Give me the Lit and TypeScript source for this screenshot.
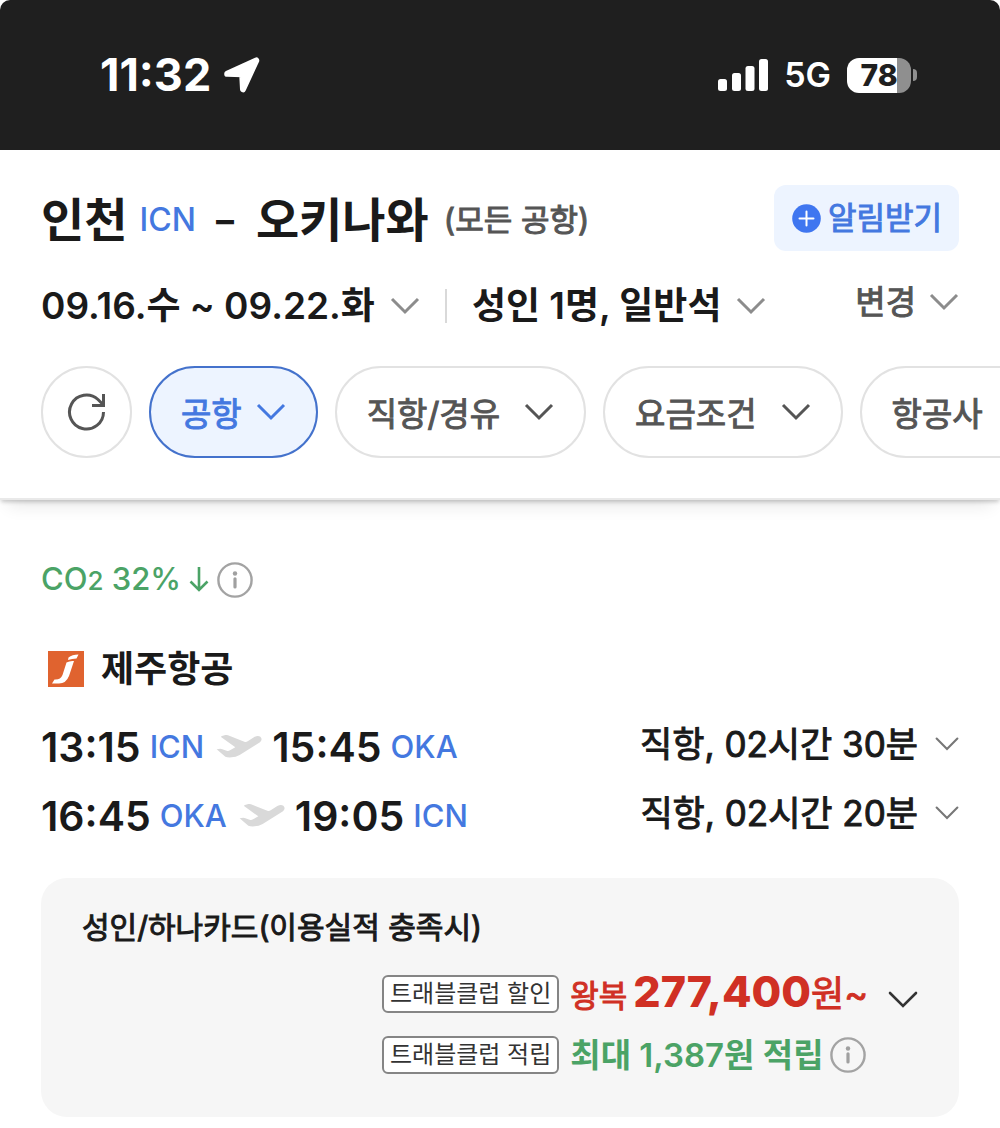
import { LitElement, html, css, svg } from "lit";
import { customElement, property } from "lit/decorators.js";

interface Leg {
  departTime: string;
  departCode: string;
  arriveTime: string;
  arriveCode: string;
  duration: string;
}

const legs: Leg[] = [
  { departTime: "13:15", departCode: "ICN", arriveTime: "15:45", arriveCode: "OKA", duration: "직항, 02시간 30분" },
  { departTime: "16:45", departCode: "OKA", arriveTime: "19:05", arriveCode: "ICN", duration: "직항, 02시간 20분" },
];

const filters = [
  { label: "공항", active: true },
  { label: "직항/경유", active: false },
  { label: "요금조건", active: false },
  { label: "항공사", active: false },
];

const paths = {
  chevron: svg`<path d="M2 2 15 15 28 2" fill="none" stroke="currentColor" stroke-width="3" />`,
  thinChevron: svg`<path d="M2 2 15 15 28 2" fill="none" stroke="currentColor" stroke-width="2.6" stroke-linecap="round" />`,
};

/* Hangul has no medium cut, so a hairline stroke thickens the regular one. */
const mediumHangul = css`
  .medium { font-weight: 400; -webkit-text-stroke: 1px currentColor; }
`;

@customElement("chevron-icon")
export class ChevronIcon extends LitElement {
  @property({ type: Boolean }) thin = false;

  static styles = css`
    :host { display: block; width: 30px; flex: none; }
    .glyph { display: block; width: 100%; }
  `;

  render() {
    return html`<svg class="glyph" viewBox="0 0 30 18" aria-hidden="true">
      ${this.thin ? paths.thinChevron : paths.chevron}
    </svg>`;
  }
}

@customElement("info-button")
export class InfoButton extends LitElement {
  @property() label = "";

  static styles = css`
    :host { display: block; flex: none; }
    .info { display: block; padding: 0; border: 0; background: none; cursor: pointer; }
    .glyph { display: block; width: 36px; height: 36px; }
  `;

  render() {
    return html`<button class="info" type="button" aria-label=${this.label}>
      <svg class="glyph" viewBox="0 0 36 36" aria-hidden="true">
        <circle cx="18" cy="18" r="16.6" fill="none" stroke="#a3a3a3" stroke-width="2.4" />
        <circle cx="18" cy="11.5" r="2.2" fill="#a0a0a0" />
        <path d="M18 16.8V25" stroke="#a0a0a0" stroke-width="3.2" stroke-linecap="round" />
      </svg>
    </button>`;
  }
}

@customElement("status-bar")
export class StatusBar extends LitElement {
  static styles = css`
    :host {
      display: flex;
      align-items: center;
      justify-content: space-between;
      height: 150px;
      box-sizing: border-box;
      padding: 0 83px 0 100px;
      border-radius: 10px 10px 0 0;
      background: #1f1f1f;
      color: #fff;
    }
    .group { display: flex; align-items: center; }
    .clock { font-size: 45px; line-height: 48px; font-weight: 700; }
    .arrow { width: 36px; height: 36px; margin-left: 13px; }
    .signal { width: 50px; height: 33px; }
    .network { margin: 0 16px; font-size: 34px; line-height: 40px; font-weight: 600; }
    .battery { display: flex; align-items: center; gap: 2px; }
    .cell {
      display: grid;
      place-items: center;
      width: 64px;
      height: 35px;
      border-radius: 12px;
      background: linear-gradient(90deg, #fff 78%, #8f8f8f 78%);
      color: #1f1f1f;
      font-size: 30px;
      line-height: 35px;
      font-weight: 800;
    }
    .nub { width: 4px; height: 12px; border-radius: 0 6px 6px 0; background: #8f8f8f; }
  `;

  render() {
    return html`
      <div class="group">
        <span class="clock">11:32</span>
        <svg class="arrow" viewBox="0 0 36 36" aria-hidden="true">
          <path d="M3.2 16.8 32.3 3.4 19 32.3 18.2 17.3Z" fill="#fff" stroke="#fff" stroke-width="6" stroke-linejoin="round" />
        </svg>
      </div>
      <div class="group">
        <svg class="signal" viewBox="0 0 50 33" fill="#fff" aria-hidden="true">
          <rect x="0" y="20" width="9" height="12" rx="2.5" />
          <rect x="14" y="14" width="9" height="18" rx="2.5" />
          <rect x="27.5" y="7" width="9" height="25" rx="2.5" />
          <rect x="41" y="0" width="9" height="32" rx="2.5" />
        </svg>
        <span class="network">5G</span>
        <div class="battery"><span class="cell">78</span><span class="nub"></span></div>
      </div>
    `;
  }
}

@customElement("search-summary")
export class SearchSummary extends LitElement {
  static styles = [
    css`
      :host {
        display: block;
        position: relative;
        padding: 35px 0 40px;
        background: #fff;
        border-bottom: 2px solid #e9e9e9;
        box-shadow: 0 3px 4px -1px rgba(0, 0, 0, 0.2), 0 14px 16px -8px rgba(0, 0, 0, 0.09);
      }
      button { margin: 0; padding: 0; border: 0; background: none; font: inherit; color: inherit; cursor: pointer; }
      .row { display: flex; align-items: center; justify-content: space-between; padding: 0 41px; }
      .route { display: flex; align-items: center; margin: 0; padding-top: 4px; color: #1a1a1a; font-size: 47px; line-height: 62px; font-weight: 700; white-space: nowrap; }
      .code { margin: 0 20px 0 12px; color: #4478e0; font-size: 32px; font-weight: 500; }
      .dash { margin-right: 22px; font-size: 36px; }
      .scope { margin-left: 15px; color: #555; font-size: 31px; }
      .alert {
        display: flex;
        align-items: center;
        gap: 7px;
        height: 66px;
        padding: 0 17px 0 18px;
        border-radius: 12px;
        background: #edf4ff;
        color: #4478e0;
        font-size: 31px;
        line-height: 48px;
      }
      .plus { width: 29px; height: 29px; }
      .criteria { height: 77px; margin-top: 16px; }
      .picks { display: flex; align-items: center; }
      .pick { display: flex; align-items: center; gap: 15px; color: #1a1a1a; font-size: 37px; line-height: 48px; font-weight: 600; white-space: nowrap; }
      .pick chevron-icon, .change chevron-icon { color: #8c8c8c; }
      .divider { width: 2px; height: 34px; margin: 0 25px; background: #d9d9d9; }
      .change { display: flex; align-items: center; gap: 13px; padding-bottom: 8px; color: #555; font-size: 33px; line-height: 48px; }
      .filters { display: flex; gap: 17px; margin-top: 22px; padding: 0 0 0 41px; overflow-x: auto; scrollbar-width: none; }
      .filters .chip {
        display: flex;
        flex: none;
        align-items: center;
        gap: 24px;
        height: 92px;
        padding: 0 30px;
        border: 2px solid #e2e2e2;
        border-radius: 46px;
        color: #555;
        font-size: 33px;
        white-space: nowrap;
      }
      .filters .round { justify-content: center; width: 91px; padding: 0; color: #555; }
      .filters .active { gap: 14px; border-color: #4472cc; background: #edf4ff; color: #4478e0; }
      .reload { width: 40px; height: 40px; }
    `,
    mediumHangul,
  ];

  render() {
    return html`
      <div class="row">
        <h1 class="route">
          <span>인천</span><span class="code">ICN</span><span class="dash">–</span>
          <span>오키나와</span><span class="scope medium">(모든 공항)</span>
        </h1>
        <button class="alert" type="button">
          <svg class="plus" viewBox="0 0 29 29" aria-hidden="true">
            <circle cx="14.5" cy="14.5" r="14.3" fill="#3f76f0" />
            <path d="M14.5 7.5v14M7.5 14.5h14" stroke="#fff" stroke-width="2" stroke-linecap="round" />
          </svg>
          <span class="medium">알림받기</span>
        </button>
      </div>
      <div class="row criteria">
        <div class="picks">
          <button class="pick" type="button">09.16.수 ~ 09.22.화<chevron-icon></chevron-icon></button>
          <span class="divider"></span>
          <button class="pick" type="button">성인 1명, 일반석<chevron-icon></chevron-icon></button>
        </div>
        <button class="change" type="button"><span class="medium">변경</span><chevron-icon></chevron-icon></button>
      </div>
      <nav class="filters" aria-label="필터">
        <button class="chip round" type="button" aria-label="초기화">
          <svg class="reload" viewBox="0 0 40 40" fill="none" stroke="currentColor" stroke-width="3" aria-hidden="true">
            <path d="M36.5 20A17 17 0 1 1 31 7.5L36 12.5" />
            <path d="M36.5 2V13.5H25" />
          </svg>
        </button>
        ${filters.map(
          (filter) => html`<button class="chip ${filter.active ? "active" : ""}" type="button">
            <span class="medium">${filter.label}</span><chevron-icon></chevron-icon>
          </button>`,
        )}
      </nav>
    `;
  }
}

@customElement("flight-result")
export class FlightResult extends LitElement {
  static styles = [
    css`
      :host { display: block; padding: 56px 41px 11px; color: #1a1a1a; }
      button { margin: 0; padding: 0; border: 0; background: none; font: inherit; color: inherit; cursor: pointer; }
      .carbon { display: flex; align-items: center; height: 48px; color: #4ba366; font-size: 31px; line-height: 48px; font-weight: 500; }
      .carbon .small { font-size: 26px; }
      .down { width: 20px; height: 28px; margin: 0 8px; }
      .airline { display: flex; align-items: center; gap: 17px; height: 50px; margin: 40px 0 0; padding-left: 7px; font-size: 36px; line-height: 50px; font-weight: 600; }
      .logo { width: 36px; height: 36px; }
      .legs { margin: 18px 0 0; padding: 0; list-style: none; }
      .leg { display: flex; align-items: center; justify-content: space-between; height: 69px; }
      .times { display: flex; align-items: center; line-height: 50px; }
      .time { font-size: 41px; font-weight: 600; }
      .code { margin-left: 9px; color: #4478e0; font-size: 31px; font-weight: 500; }
      .plane { width: 46px; height: 23px; margin: 0 10px 0 12px; }
      .duration { display: flex; align-items: center; gap: 17px; padding-bottom: 5px; font-size: 35px; line-height: 50px; }
      .duration chevron-icon { width: 24px; color: #777; }
      .fare { margin-top: 28px; padding: 25px 41px 32px; border-radius: 26px; background: #f6f6f6; }
      .condition { margin: 0; font-size: 30px; line-height: 48px; }
      .offers { display: grid; grid-template-columns: 1fr auto auto; grid-auto-rows: 61px; align-items: center; margin-top: 12px; white-space: nowrap; }
      .tag { justify-self: end; margin-right: 11px; padding: 0 6px; border: 2px solid #858585; border-radius: 6px; background: #fff; color: #333; font-size: 24px; line-height: 34px; }
      .price { display: flex; align-items: baseline; color: #d03024; font-size: 31px; line-height: 50px; }
      .amount { margin-left: 6px; font-size: 43px; font-weight: 800; }
      .won { font-size: 36px; }
      .saving { display: flex; align-items: center; gap: 6px; }
      .reward { color: #4ba366; font-size: 33px; line-height: 50px; font-weight: 600; }
      .more { align-self: start; margin-left: 20px; padding-top: 28px; color: #333; }
    `,
    mediumHangul,
  ];

  private renderLeg(leg: Leg) {
    return html`<li class="leg">
      <div class="times">
        <span class="time">${leg.departTime}</span><span class="code">${leg.departCode}</span>
        <svg class="plane" viewBox="0 0 136 69" fill="#d9d9d9" aria-hidden="true">
          <path d="M1 43 12 41Q15 41 18 43L33 48Q37 49 41 46L57 37 15 7Q13 4 17 3L27 0Q31 -1 35 1L84 20Q89 22 94 19L114 6Q125 0 132 5 140 13 131 22L70 60Q58 67 46 67 34 68 27 65 20 60Z" />
        </svg>
        <span class="time">${leg.arriveTime}</span><span class="code">${leg.arriveCode}</span>
      </div>
      <button class="duration" type="button">
        <span class="medium">${leg.duration}</span><chevron-icon thin></chevron-icon>
      </button>
    </li>`;
  }

  render() {
    return html`
      <div class="carbon">
        <span>CO<span class="small">2</span> 32%</span>
        <svg class="down" viewBox="0 0 20 28" fill="none" stroke="currentColor" stroke-width="2.6" aria-hidden="true">
          <path d="M10 1V24M1.5 15.5 10 24 18.5 15.5" />
        </svg>
        <info-button label="탄소 배출량 안내"></info-button>
      </div>
      <h2 class="airline">
        <svg class="logo" viewBox="0 0 36 36" aria-hidden="true">
          <rect width="36" height="36" fill="#e0632f" />
          <path d="M20.5 6.5Q24 3.5 30.5 3.5L28.5 7.5Q24 7.5 20 9Z" fill="#fff" />
          <path d="M18.5 11.500Q22 9.5 26 10L21 25Q18 32.5 11 32.5H4L6.500 28.5Q12.5 29 14.5 24Z" fill="#fff" />
        </svg>
        제주항공
      </h2>
      <ul class="legs">${legs.map((leg) => this.renderLeg(leg))}</ul>
      <section class="fare">
        <p class="condition medium">성인/하나카드(이용실적 충족시)</p>
        <div class="offers">
          <span class="tag">트래블클럽 할인</span>
          <span class="price">
            <span class="medium">왕복</span><span class="amount">277,400</span><span class="won medium">원~</span>
          </span>
          <button class="more" type="button" aria-label="요금 더보기"><chevron-icon thin></chevron-icon></button>
          <span class="tag">트래블클럽 적립</span>
          <div class="saving">
            <span class="reward">최대 1,387원 적립</span>
            <info-button label="적립 안내"></info-button>
          </div>
        </div>
      </section>
    `;
  }
}

@customElement("app-root")
export class AppRoot extends LitElement {
  static styles = css`
    :host {
      display: block;
      background: #fff;
      font-family: Inter, "Noto Sans CJK KR", sans-serif;
    }
  `;

  render() {
    return html`
      <status-bar></status-bar>
      <main>
        <search-summary></search-summary>
        <flight-result></flight-result>
      </main>
    `;
  }
}
